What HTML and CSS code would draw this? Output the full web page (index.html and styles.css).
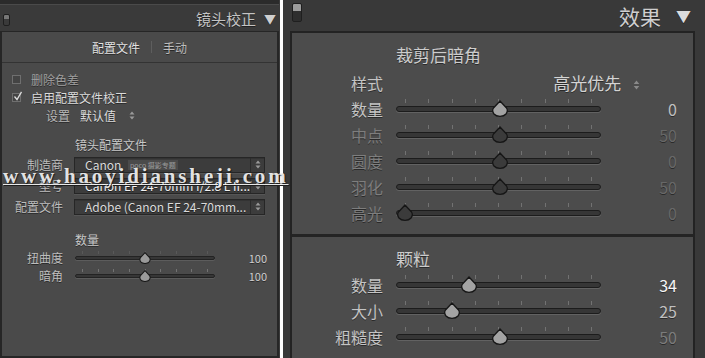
FILE: index.html
```html
<!DOCTYPE html>
<html lang="zh-CN">
<head>
    <meta charset="UTF-8">
    <title>镜头校正 / 效果</title>
    <link rel="stylesheet" href="styles.css">
</head>
<body>
    <!-- Lens correction panel -->
    <div class="panel lens">
        <div class="topbar"></div>
        <div class="head">
            <div class="toggle small"></div>
            <span class="head-title">镜头校正</span>
            <span class="caret">▼</span>
        </div>
        <div class="lens-body">
            <div class="tabs">
                <span class="tab active">配置文件</span>
                <span class="tab-sep"></span>
                <span class="tab">手动</span>
            </div>

            <div class="checks">
                <div class="check-row dim">
                    <span class="box"></span>删除色差
                </div>
                <div class="check-row">
                    <span class="box checked">
                        <svg viewBox="0 0 10 10" width="10" height="10"><path d="M1.5 5.5 L4 8.5 L8.5 0.8" fill="none" stroke="#ddd" stroke-width="1.3"/></svg>
                    </span>启用配置文件校正
                </div>
                <div class="setting-row">
                    <span class="setting-lbl">设置</span>
                    <span class="setting-val">默认值</span>
                    <svg class="updown" viewBox="0 0 6 9" width="6" height="9"><path d="M3 0.5 L5.5 3.5 H0.5 Z M3 8.5 L5.5 5.5 H0.5 Z" fill="#9a9a9a"/></svg>
                </div>
            </div>

            <div class="sub-title">镜头配置文件</div>
            <div class="field-row">
                <span class="field-lbl">制造商</span>
                <div class="select">
                    <span class="select-text">Canon</span>
                    <span class="select-arrows"><svg viewBox="0 0 6 9" width="6" height="9"><path d="M3 0.5 L5.5 3.5 H0.5 Z M3 8.5 L5.5 5.5 H0.5 Z" fill="#9a9a9a"/></svg></span>
                </div>
            </div>
            <div class="field-row">
                <span class="field-lbl">型号</span>
                <div class="select">
                    <span class="select-text bright">Canon EF 24-70mm f/2.8 L II...</span>
                    <span class="select-arrows"><svg viewBox="0 0 6 9" width="6" height="9"><path d="M3 0.5 L5.5 3.5 H0.5 Z M3 8.5 L5.5 5.5 H0.5 Z" fill="#9a9a9a"/></svg></span>
                </div>
            </div>
            <div class="field-row">
                <span class="field-lbl">配置文件</span>
                <div class="select">
                    <span class="select-text">Adobe (Canon EF 24-70mm...</span>
                    <span class="select-arrows"><svg viewBox="0 0 6 9" width="6" height="9"><path d="M3 0.5 L5.5 3.5 H0.5 Z M3 8.5 L5.5 5.5 H0.5 Z" fill="#9a9a9a"/></svg></span>
                </div>
            </div>

            <div class="sub-title amount">数量</div>
            <div class="mini-row">
                <span class="field-lbl">扭曲度</span>
                <div class="mini-slider">
                    <div class="ticks faint"><i></i><i></i><i></i><i></i><i></i><i></i><i></i><i></i><i></i></div>
                    <div class="mini-track"></div>
                    <div class="rail"><svg class="mini-thumb" style="left: 50%" viewBox="0 0 16 17"><path d="M8 1 L14.5 8 C15.5 9.5 15.5 12 14 14 C12.5 15.8 10.5 16.3 8 16.3 C5.5 16.3 3.5 15.8 2 14 C0.5 12 0.5 9.5 1.5 8 Z" fill="#9a9a9a" stroke="#1a1a1a" stroke-width="1.5"/></svg></div>
                </div>
                <span class="mini-val">100</span>
            </div>
            <div class="mini-row">
                <span class="field-lbl">暗角</span>
                <div class="mini-slider">
                    <div class="ticks"><i></i><i></i><i></i><i></i><i></i><i></i><i></i><i></i><i></i></div>
                    <div class="mini-track"></div>
                    <div class="rail"><svg class="mini-thumb" style="left: 50%" viewBox="0 0 16 17"><path d="M8 1 L14.5 8 C15.5 9.5 15.5 12 14 14 C12.5 15.8 10.5 16.3 8 16.3 C5.5 16.3 3.5 15.8 2 14 C0.5 12 0.5 9.5 1.5 8 Z" fill="#9a9a9a" stroke="#1a1a1a" stroke-width="1.5"/></svg></div>
                </div>
                <span class="mini-val">100</span>
            </div>
        </div>
    </div>

    <!-- Effects panel -->
    <div class="panel effects">
        <div class="fx-head">
            <div class="toggle"></div>
            <span class="fx-title">效果</span>
            <span class="fx-caret">▼</span>
        </div>
        <div class="fx-body">
            <div class="fx-section">
                <div class="fx-sub">裁剪后暗角</div>
                <div class="fx-row">
                    <span class="fx-lbl">样式</span>
                    <span class="fx-style">高光优先
                        <svg viewBox="0 0 6 9" width="7" height="10"><path d="M3 0.5 L5.5 3.5 H0.5 Z M3 8.5 L5.5 5.5 H0.5 Z" fill="#8a8a8a"/></svg>
                    </span>
                </div>
                <div class="fx-row">
                    <span class="fx-lbl">数量</span>
                    <div class="slider">
                        <div class="ticks"><i></i><i></i><i></i><i></i><i></i><i></i><i></i><i></i><i></i></div>
                        <div class="track"></div>
                        <div class="rail"><svg class="thumb" style="left: 51%" viewBox="0 0 16 17"><path d="M8 1 L14.5 8 C15.5 9.5 15.5 12 14 14 C12.5 15.8 10.5 16.3 8 16.3 C5.5 16.3 3.5 15.8 2 14 C0.5 12 0.5 9.5 1.5 8 Z" fill="#a3a3a3" stroke="#161616" stroke-width="1.3"/></svg></div>
                    </div>
                    <span class="fx-val">0</span>
                </div>
                <div class="fx-row off">
                    <span class="fx-lbl">中点</span>
                    <div class="slider">
                        <div class="ticks"><i></i><i></i><i></i><i></i><i></i><i></i><i></i><i></i><i></i></div>
                        <div class="track"></div>
                        <div class="rail"><svg class="thumb" style="left: 51%" viewBox="0 0 16 17"><path d="M8 1 L14.5 8 C15.5 9.5 15.5 12 14 14 C12.5 15.8 10.5 16.3 8 16.3 C5.5 16.3 3.5 15.8 2 14 C0.5 12 0.5 9.5 1.5 8 Z" fill="#3b3b3b" stroke="#161616" stroke-width="1.3"/></svg></div>
                    </div>
                    <span class="fx-val">50</span>
                </div>
                <div class="fx-row off">
                    <span class="fx-lbl">圆度</span>
                    <div class="slider">
                        <div class="ticks"><i></i><i></i><i></i><i></i><i></i><i></i><i></i><i></i><i></i></div>
                        <div class="track"></div>
                        <div class="rail"><svg class="thumb" style="left: 51%" viewBox="0 0 16 17"><path d="M8 1 L14.5 8 C15.5 9.5 15.5 12 14 14 C12.5 15.8 10.5 16.3 8 16.3 C5.5 16.3 3.5 15.8 2 14 C0.5 12 0.5 9.5 1.5 8 Z" fill="#3b3b3b" stroke="#161616" stroke-width="1.3"/></svg></div>
                    </div>
                    <span class="fx-val">0</span>
                </div>
                <div class="fx-row off">
                    <span class="fx-lbl">羽化</span>
                    <div class="slider">
                        <div class="ticks"><i></i><i></i><i></i><i></i><i></i><i></i><i></i><i></i><i></i></div>
                        <div class="track"></div>
                        <div class="rail"><svg class="thumb" style="left: 51%" viewBox="0 0 16 17"><path d="M8 1 L14.5 8 C15.5 9.5 15.5 12 14 14 C12.5 15.8 10.5 16.3 8 16.3 C5.5 16.3 3.5 15.8 2 14 C0.5 12 0.5 9.5 1.5 8 Z" fill="#3b3b3b" stroke="#161616" stroke-width="1.3"/></svg></div>
                    </div>
                    <span class="fx-val">50</span>
                </div>
                <div class="fx-row off">
                    <span class="fx-lbl">高光</span>
                    <div class="slider">
                        <div class="ticks"><i></i><i></i><i></i><i></i><i></i><i></i><i></i><i></i><i></i></div>
                        <div class="track"></div>
                        <div class="rail"><svg class="thumb" style="left: 0%" viewBox="0 0 16 17"><path d="M8 1 L14.5 8 C15.5 9.5 15.5 12 14 14 C12.5 15.8 10.5 16.3 8 16.3 C5.5 16.3 3.5 15.8 2 14 C0.5 12 0.5 9.5 1.5 8 Z" fill="#3b3b3b" stroke="#161616" stroke-width="1.3"/></svg></div>
                    </div>
                    <span class="fx-val">0</span>
                </div>
            </div>

            <div class="fx-section grain">
                <div class="fx-sub">颗粒</div>
                <div class="fx-row">
                    <span class="fx-lbl">数量</span>
                    <div class="slider">
                        <div class="ticks"><i></i><i></i><i></i><i></i><i></i><i></i><i></i><i></i><i></i></div>
                        <div class="track"></div>
                        <div class="rail"><svg class="thumb" style="left: 34%" viewBox="0 0 16 17"><path d="M8 1 L14.5 8 C15.5 9.5 15.5 12 14 14 C12.5 15.8 10.5 16.3 8 16.3 C5.5 16.3 3.5 15.8 2 14 C0.5 12 0.5 9.5 1.5 8 Z" fill="#a3a3a3" stroke="#161616" stroke-width="1.3"/></svg></div>
                    </div>
                    <span class="fx-val hot">34</span>
                </div>
                <div class="fx-row">
                    <span class="fx-lbl">大小</span>
                    <div class="slider">
                        <div class="ticks"><i></i><i></i><i></i><i></i><i></i><i></i><i></i><i></i><i></i></div>
                        <div class="track"></div>
                        <div class="rail"><svg class="thumb" style="left: 25%" viewBox="0 0 16 17"><path d="M8 1 L14.5 8 C15.5 9.5 15.5 12 14 14 C12.5 15.8 10.5 16.3 8 16.3 C5.5 16.3 3.5 15.8 2 14 C0.5 12 0.5 9.5 1.5 8 Z" fill="#a3a3a3" stroke="#161616" stroke-width="1.3"/></svg></div>
                    </div>
                    <span class="fx-val">25</span>
                </div>
                <div class="fx-row">
                    <span class="fx-lbl">粗糙度</span>
                    <div class="slider">
                        <div class="ticks"><i></i><i></i><i></i><i></i><i></i><i></i><i></i><i></i><i></i></div>
                        <div class="track"></div>
                        <div class="rail"><svg class="thumb" style="left: 51%" viewBox="0 0 16 17"><path d="M8 1 L14.5 8 C15.5 9.5 15.5 12 14 14 C12.5 15.8 10.5 16.3 8 16.3 C5.5 16.3 3.5 15.8 2 14 C0.5 12 0.5 9.5 1.5 8 Z" fill="#a3a3a3" stroke="#161616" stroke-width="1.3"/></svg></div>
                    </div>
                    <span class="fx-val dim">50</span>
                </div>
            </div>
        </div>
    </div>

    <!-- watermarks lying over the screenshots -->
    <span class="poco">poco 摄影专题</span>
    <span class="watermark">www.haoyidiansheji.com</span>
</body>
</html>
```

FILE: styles.css
```css
* {
    box-sizing: border-box;
}

body {
    margin: 0;
    width: 705px;
    height: 358px;
    overflow: hidden;
    background-color: #ffffff;
    display: flex;
    gap: 3px;
    position: relative;
    font-family: "Noto Sans CJK SC", "Noto Sans", sans-serif;
    color: #c8c8c8;
    text-shadow: 0 1px 0 rgba(0, 0, 0, 0.45);
}

.panel {
    height: 358px;
    display: flex;
    flex-direction: column;
}

/* ---------- left: lens correction ---------- */

.lens {
    width: 280px;
    background-color: #3a3a3a;
    padding-right: 1px;
}

.topbar {
    height: 5px;
    background-color: #2b2b2b;
    border-bottom: 1px solid #4a4a4a;
}

.head {
    height: 26px;
    display: flex;
    align-items: center;
    padding: 0 3px 0 3px;
}

.toggle {
    width: 10px;
    height: 19px;
    border: 1px solid #1f1f1f;
    border-radius: 2px;
    background: linear-gradient(#9c9c9c 0, #9c9c9c 40%, #2e2e2e 40%);
    margin-right: auto;
}

.toggle.small {
    width: 7px;
    height: 12px;
    margin-top: 4px;
    background: linear-gradient(#777 0, #777 45%, #3a3a3a 45%);
}

.head-title {
    font-size: 15px;
    color: #c4c4c4;
    margin-right: 8px;
}

.caret {
    font-size: 12px;
    color: #cfcfcf;
}

.lens-body {
    flex: 1;
    background-color: #4a4a4a;
    border: 2px solid #262626;
    border-top-width: 1px;
    font-size: 12px;
}

.tabs {
    height: 31px;
    display: flex;
    align-items: center;
    justify-content: center;
    gap: 11px;
    border-bottom: 1px solid #333;
    color: #bdbdbd;
}

.tab.active {
    color: #e2e2e2;
}

.tab-sep {
    width: 1px;
    height: 12px;
    background-color: #5e5e5e;
}

.checks {
    padding-top: 7px;
}

.check-row {
    height: 18px;
    display: flex;
    align-items: center;
    padding-left: 10px;
    color: #dcdcdc;
}

.check-row.dim {
    color: #a0a0a0;
}

.box {
    width: 9px;
    height: 9px;
    border: 1px solid #6f6f6f;
    background-color: #444;
    margin-right: 10px;
    position: relative;
}

.box.checked svg {
    position: absolute;
    left: 0;
    top: -3px;
}

.setting-row {
    height: 18px;
    display: flex;
    align-items: center;
    padding-left: 44px;
}

.setting-lbl {
    color: #b8b8b8;
    margin-right: 10px;
}

.setting-val {
    color: #dcdcdc;
    margin-right: 13px;
}

.sub-title {
    height: 18px;
    line-height: 18px;
    margin-top: 12px;
    padding-left: 73px;
    color: #c8c8c8;
}

.sub-title.amount {
    margin-top: 14px;
}

.field-row {
    height: 21px;
    display: flex;
    align-items: center;
}

.field-lbl {
    width: 61px;
    text-align: right;
    color: #bdbdbd;
    margin-right: 11px;
}

.select {
    width: 191px;
    height: 16px;
    display: flex;
    align-items: center;
    background-color: #3c3c3c;
    border: 1px solid #262626;
    box-shadow: inset 0 1px 0 #333, 0 1px 0 #565656;
}

.select-text {
    flex: 1;
    padding-left: 10px;
    color: #dadada;
    white-space: nowrap;
    overflow: hidden;
    font-size: 12px;
}

.select-text.bright {
    color: #f2f2f2;
}

.select-arrows {
    width: 14px;
    height: 100%;
    border-left: 1px solid #2c2c2c;
    display: flex;
    align-items: center;
    justify-content: center;
}

.mini-row {
    height: 18px;
    display: flex;
    align-items: flex-start;
}

.mini-row .field-lbl {
    line-height: 18px;
    margin-right: 12px;
}

.mini-slider {
    position: relative;
    width: 140px;
    display: flex;
    flex-direction: column;
}

.mini-slider .ticks {
    margin: 2px 7px 0;
    height: 3px;
}

.mini-track {
    height: 4px;
    margin-top: 2px;
    border-radius: 2px;
    background-color: #363636;
    border: 1px solid #232323;
    box-shadow: 0 1px 0 #5c5c5c;
}

/* thumbs travel along a rail inset like the ticks */
.rail {
    position: absolute;
    top: 0;
    left: 9px;
    right: 9px;
}

.mini-slider .rail {
    left: 7px;
    right: 7px;
}

.mini-thumb {
    position: absolute;
    top: 3px;
    width: 12px;
    height: 12px;
    transform: translateX(-50%);
}

.mini-val {
    width: 52px;
    text-align: right;
    font-size: 11px;
    line-height: 18px;
    color: #d0d0d0;
}

/* ---------- shared ticks ---------- */

.ticks {
    display: flex;
    justify-content: space-between;
}

.ticks i {
    width: 1px;
    background-color: #727272;
}

.ticks.faint i {
    background-color: #595959;
}

/* ---------- right: effects ---------- */

.effects {
    width: 422px;
    background-color: #393939;
    padding: 0 10px 0 7px;
}

.fx-head {
    height: 31px;
    display: flex;
    align-items: center;
    padding: 0 4px 0 2px;
}

.fx-head .toggle {
    margin-top: -7px;
}

.fx-title {
    font-size: 21px;
    color: #cfcfcf;
    margin-right: 15px;
}

.fx-caret {
    font-size: 15px;
    color: #dcdcdc;
}

.fx-body {
    flex: 1;
    background-color: #4c4c4c;
    border: 2px solid #232323;
    border-bottom: none;
}

.fx-section {
    padding: 9px 0 8px;
}

.fx-section.grain {
    border-top: 3px solid #242424;
    padding-top: 9px;
}

.fx-sub {
    height: 26px;
    line-height: 26px;
    padding-left: 104px;
    font-size: 17px;
    color: #cdcdcd;
    margin-bottom: 2px;
}

.grain .fx-sub {
    margin-bottom: 0;
}

.fx-row {
    height: 26px;
    display: flex;
    align-items: flex-start;
}

.fx-lbl {
    width: 91px;
    text-align: right;
    font-size: 16px;
    line-height: 26px;
    color: #c4c4c4;
    margin-right: 13px;
}

.fx-style {
    width: 244px;
    text-align: right;
    font-size: 17px;
    line-height: 26px;
    color: #d4d4d4;
}

.fx-style svg {
    margin-left: 8px;
}

.slider {
    position: relative;
    width: 205px;
    display: flex;
    flex-direction: column;
}

.slider .ticks {
    margin: 3px 9px 0;
    height: 4px;
}

.track {
    height: 6px;
    margin-top: 3px;
    border-radius: 3px;
    background-color: #363636;
    border: 1px solid #1c1c1c;
    box-shadow: 0 1px 0 #626262;
}

.thumb {
    position: absolute;
    top: 4px;
    width: 16px;
    height: 17px;
    transform: translateX(-50%);
}

.fx-val {
    width: 76px;
    text-align: right;
    font-size: 16px;
    line-height: 26px;
    color: #c0c0c0;
}

.fx-val.hot {
    color: #f6f6f6;
}

.fx-val.dim {
    color: #7c7c7c;
}

.fx-row.off .fx-lbl {
    color: #7e7e7e;
}

.fx-row.off .fx-val {
    color: #686868;
}

/* ---------- overlays ---------- */

.poco {
    position: absolute;
    left: 128px;
    top: 160px;
    font-size: 7px;
    color: rgba(255, 255, 255, 0.45);
    background-color: rgba(255, 255, 255, 0.08);
    padding: 0 2px;
    text-shadow: none;
}

.watermark {
    position: absolute;
    left: 3px;
    top: 164px;
    font-family: "Liberation Serif", serif;
    font-weight: bold;
    font-size: 21px;
    letter-spacing: 2.85px;
    color: rgba(245, 245, 245, 0.92);
    text-shadow: 1px 1px 1px #1e1e1e;
    text-decoration: underline;
    text-decoration-thickness: 1px;
    text-underline-offset: 1px;
    white-space: nowrap;
}
```
